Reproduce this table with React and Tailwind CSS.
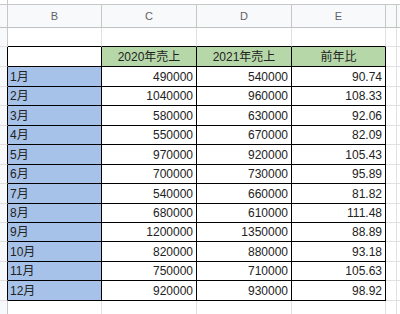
const rows = [
  ['1月', '490000', '540000', '90.74'],
  ['2月', '1040000', '960000', '108.33'],
  ['3月', '580000', '630000', '92.06'],
  ['4月', '550000', '670000', '82.09'],
  ['5月', '970000', '920000', '105.43'],
  ['6月', '700000', '730000', '95.89'],
  ['7月', '540000', '660000', '81.82'],
  ['8月', '680000', '610000', '111.48'],
  ['9月', '1200000', '1350000', '88.89'],
  ['10月', '820000', '880000', '93.18'],
  ['11月', '750000', '710000', '105.63'],
  ['12月', '920000', '930000', '98.92'],
];

// row heights include the bottom border line
const heights = ['h-[20px]', 'h-[20px]', 'h-[19px]', 'h-[20px]', 'h-[19px]', 'h-[20px]', 'h-[19px]', 'h-[20px]', 'h-[19px]', 'h-[19px]', 'h-[20px]', 'h-[19px]', 'h-[20px]'];

function TableRow({ h, cells, header }) {
  const fill = header ? 'bg-[#b6d7a8] justify-center' : 'bg-white justify-end pr-[3px]';
  return (
    <div className={`flex ${h}`}>
      <div className="w-[8px] shrink-0 bg-[#f8f9fa] border-r border-r-black border-b border-b-[#e1e1e1]" />
      <div className={`w-[94px] shrink-0 flex items-center pl-[2px] border-r border-b border-black ${header ? 'bg-white' : 'bg-[#a7c2e8]'}`}>
        {cells[0]}
      </div>
      <div className={`w-[95px] shrink-0 flex items-center border-r border-b border-black ${fill}`}>{cells[1]}</div>
      <div className={`w-[95px] shrink-0 flex items-center border-r border-b border-black ${fill}`}>{cells[2]}</div>
      <div className={`w-[94px] shrink-0 flex items-center border-r border-b border-black ${fill}`}>{cells[3]}</div>
      <div className="w-[11px] shrink-0 border-r border-[#e1e1e1] border-b" />
      <div className="flex-1 border-b border-[#e1e1e1]" />
    </div>
  );
}

export default function App() {
  return (
    <div className="w-[400px] h-[314px] overflow-hidden bg-white text-[12px] text-[#222] leading-none" style={{ fontFamily: '"Liberation Sans", Arial, "Noto Sans CJK JP", sans-serif' }}>
      {/* top strip */}
      <div className="flex h-[5px] border-b border-[#c7c7c7]">
        <div className="w-[8px] border-r border-[#c7c7c7]" />
      </div>

      {/* column headers */}
      <div className="flex h-[23px] bg-[#f8f9fa] border-b border-[#c0c0c0] text-[11px] text-[#5f6368]">
        <div className="w-[8px] shrink-0 border-r border-[#c7c7c7]" />
        <div className="w-[94px] shrink-0 flex items-center justify-center border-r border-[#c7c7c7]">B</div>
        <div className="w-[95px] shrink-0 flex items-center justify-center border-r border-[#c7c7c7]">C</div>
        <div className="w-[95px] shrink-0 flex items-center justify-center border-r border-[#c7c7c7]">D</div>
        <div className="w-[94px] shrink-0 flex items-center justify-center border-r border-[#c7c7c7]">E</div>
        <div className="w-[11px] shrink-0 border-r border-[#c7c7c7]" />
        <div className="flex-1" />
      </div>

      {/* blank row above the table */}
      <div className="flex h-[19px]">
        <div className="w-[8px] shrink-0 bg-[#f8f9fa] border-r border-[#c7c7c7] border-b border-b-[#e1e1e1]" />
        <div className="w-[94px] shrink-0 border-r border-r-[#e1e1e1] border-b border-b-black" />
        <div className="w-[95px] shrink-0 border-r border-r-[#e1e1e1] border-b border-b-black" />
        <div className="w-[95px] shrink-0 border-r border-r-[#e1e1e1] border-b border-b-black" />
        <div className="w-[94px] shrink-0 border-r border-r-[#e1e1e1] border-b border-b-black" />
        <div className="w-[11px] shrink-0 border-r border-[#e1e1e1] border-b" />
        <div className="flex-1 border-b border-[#e1e1e1]" />
      </div>

      <TableRow h={heights[0]} header cells={['', '2020年売上', '2021年売上', '前年比']} />
      {rows.map((r, i) => (
        <TableRow key={r[0]} h={heights[i + 1]} cells={r} />
      ))}

      {/* rest of the sheet */}
      <div className="flex h-[20px]">
        <div className="w-[8px] shrink-0 bg-[#f8f9fa] border-r border-[#c7c7c7]" />
        <div className="w-[94px] shrink-0 border-r border-[#e1e1e1]" />
        <div className="w-[95px] shrink-0 border-r border-[#e1e1e1]" />
        <div className="w-[95px] shrink-0 border-r border-[#e1e1e1]" />
        <div className="w-[94px] shrink-0 border-r border-[#e1e1e1]" />
        <div className="w-[11px] shrink-0 border-r border-[#e1e1e1]" />
        <div className="flex-1" />
      </div>
    </div>
  );
}
